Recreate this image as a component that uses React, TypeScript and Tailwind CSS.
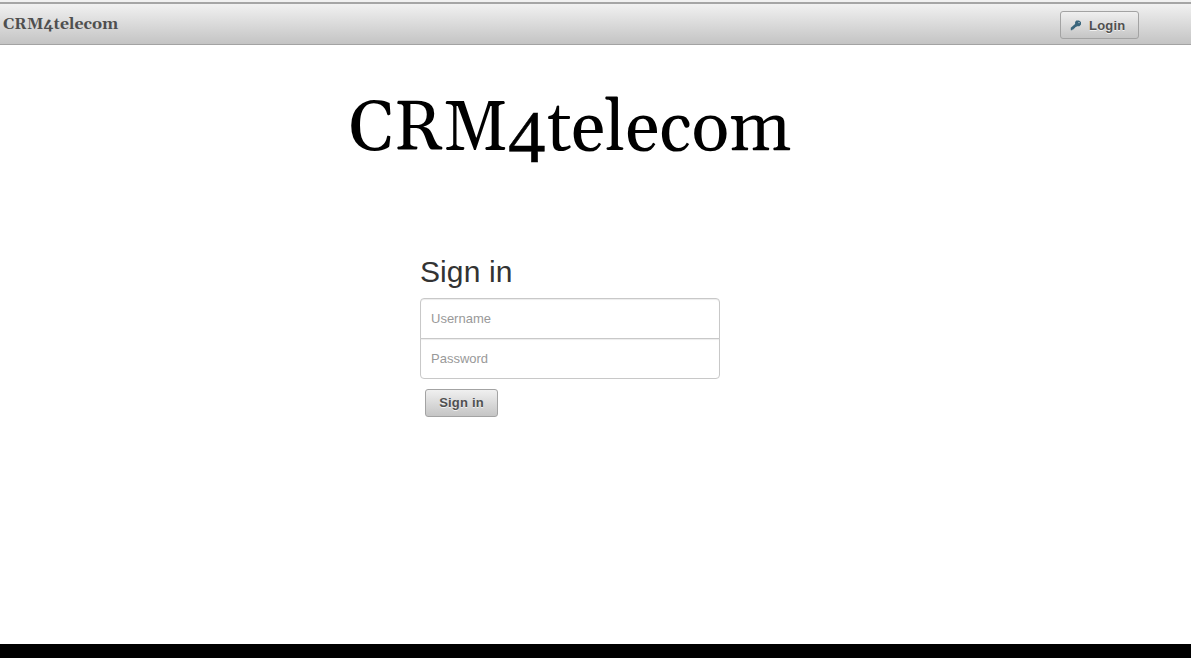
import React from "react";

const button =
  "flex h-7 items-center rounded-[3px] border border-[#a3a3a3] bg-linear-to-b from-[#f0f0f0] to-[#c5c5c5] font-bold text-[13px] tracking-[0.2px] text-[#4f4f4f] [text-shadow:0_1px_0_rgba(255,255,255,0.7)]";

function KeyIcon() {
  return (
    <svg width="12" height="12" viewBox="0 0 12 12" aria-hidden="true">
      <path
        d="M6.3 .5H9L11 2.1V4.5L9.4 6.3H7L5.8 7.2H5V8.2H3.9V9.2H2.8L2.1 10.3H.8V7.7L5.1 3.9V2Z"
        fill="#39657c"
      />
      <circle cx="9" cy="2.6" r="0.7" fill="#cfd9de" />
    </svg>
  );
}

export default function App() {
  return (
    <div className="flex h-[658px] flex-col bg-white font-['Liberation_Sans',Arial,sans-serif]">
      <header className="flex h-[45px] shrink-0 flex-col border-b border-[#a3a3a3]">
        <div className="h-1 shrink-0 border-b-2 border-[#a5a5a5] bg-[#f1f1f1]" />
        <div className="flex h-10 items-center justify-between bg-linear-to-b from-[#f1f1f1] to-[#c4c4c4] pr-[52px] pl-[3px]">
          <div className="font-[Gelasio,Georgia,'Liberation_Serif',serif] text-[15.9px] leading-5 font-bold text-[#4f4f4f]">
            CRM4telecom
          </div>
          <button className={`${button} mt-[2px] w-[79px] pt-px pl-[9px]`}>
            <KeyIcon />
            <span className="ml-[7px]">Login</span>
          </button>
        </div>
      </header>
      <main className="flex flex-1 flex-col">
        <h1 className="mt-[41px] ml-[349px] flex h-[88px] font-[Gelasio,Georgia,'Liberation_Serif',serif] text-[70px] leading-[88px] text-black">
          <span className="block w-[159px]">CRM</span>
          <span className="block w-[39px] translate-y-[7px] font-['Liberation_Serif',serif] text-[75px] [-webkit-text-stroke:0.5px_black]">4</span>
          <span className="block tracking-[0.15px]">telecom</span>
        </h1>
        <form className="mt-[78px] ml-[420px] w-[300px]" onSubmit={(e) => e.preventDefault()}>
          <h2 className="h-[46px] text-[30px] leading-10 tracking-[0.1px] text-[#333]">Sign in</h2>
          <input
            placeholder="Username"
            className="block h-[41px] w-full rounded-t-[4px] border border-[#c8c8c8] px-[10px] text-[13px] shadow-[inset_0_1px_1px_rgba(0,0,0,0.075)] outline-none placeholder:text-[#999]"
          />
          <input
            type="password"
            placeholder="Password"
            className="-mt-px block h-[41px] w-full rounded-b-[4px] border border-[#c8c8c8] px-[10px] text-[13px] shadow-[inset_0_1px_1px_rgba(0,0,0,0.075)] outline-none placeholder:text-[#999]"
          />
          <button className={`${button} mt-[10px] ml-[5px] w-[73px] justify-center`}>Sign in</button>
        </form>
      </main>
      <footer className="h-[14px] shrink-0 bg-black" />
    </div>
  );
}
